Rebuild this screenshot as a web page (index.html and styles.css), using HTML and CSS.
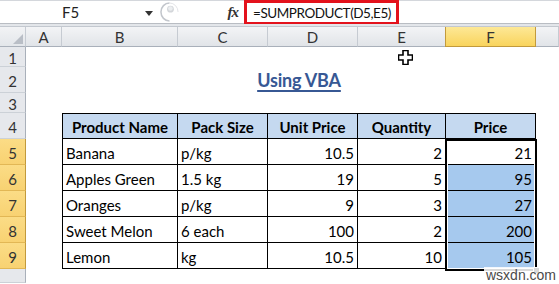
FILE: index.html
```html
<!DOCTYPE html>
<html>
<head>
<meta charset="utf-8">
<link rel="stylesheet" href="styles.css">
</head>
<body>
<div class="app">
  <div class="fbar">
    <div class="namebox">F5</div>
    <div class="nb-arrow"><svg width="8" height="5" viewBox="0 0 8 5"><path d="M0 0H8L4 5Z" fill="#333"/></svg></div>
    <div class="splitter"><svg width="20" height="22" viewBox="0 0 20 22"><path d="M10 1.5 A9 9.5 0 0 0 10 20.5" fill="none" stroke="#c2c6cc" stroke-width="1.6"/><path d="M10 1.5 A9 9.5 0 0 1 19 11" fill="none" stroke="#e0e2e6" stroke-width="1"/><circle cx="11" cy="8" r="3.6" fill="#d3d6da"/><circle cx="11" cy="7.3" r="2.4" fill="#eceef0"/></svg></div>
    <div class="fx">fx</div>
    <div class="formula"><div class="hl">=SUMPRODUCT(D5,E5)</div></div>
  </div>
  <div class="band"></div>
  <div class="sheet">
    <div class="corner"><svg width="10" height="10" viewBox="0 0 10 10"><path d="M10 0V10H0Z" fill="#b9bec6"/></svg></div>
    <div class="ch">A</div><div class="ch">B</div><div class="ch">C</div><div class="ch">D</div><div class="ch">E</div><div class="ch sel">F</div><div class="ch"></div>

    <div class="rh">1</div><div></div><div></div><div></div><div></div><div></div><div></div><div></div>

    <div class="rh">2</div><div></div><div class="title"><span>Using VBA</span></div><div></div>

    <div class="rh">3</div><div></div><div></div><div></div><div></div><div></div><div></div><div></div>

    <div class="rh">4</div><div></div>
    <div class="c th first">Product Name</div><div class="c th">Pack Size</div><div class="c th">Unit Price</div><div class="c th">Quantity</div><div class="c th">Price</div><div></div>

    <div class="rh sel">5</div><div></div>
    <div class="c first">Banana</div><div class="c">p/kg</div><div class="c n">10.5</div><div class="c n">2</div><div class="c n">21</div><div></div>
    <div class="rh sel">6</div><div></div>
    <div class="c first">Apples Green</div><div class="c">1.5 kg</div><div class="c n">19</div><div class="c n">5</div><div class="c n hi">95</div><div></div>
    <div class="rh sel">7</div><div></div>
    <div class="c first">Oranges</div><div class="c">p/kg</div><div class="c n">9</div><div class="c n">3</div><div class="c n hi">27</div><div></div>
    <div class="rh sel">8</div><div></div>
    <div class="c first">Sweet Melon</div><div class="c">6 each</div><div class="c n">100</div><div class="c n">2</div><div class="c n hi">200</div><div></div>
    <div class="rh sel">9</div><div></div>
    <div class="c first">Lemon</div><div class="c">kg</div><div class="c n">10.5</div><div class="c n">10</div><div class="c n hi">105</div><div></div>

    <div class="rh"></div><div></div><div></div><div></div><div></div><div></div><div></div><div></div>

    <div class="selection"><div class="handle"></div></div>
    <div class="cursor"><svg width="15" height="15" viewBox="0 0 15 15"><path d="M5 0.5H10V5H14.5V10H10V14.5H5V10H0.5V5H5Z" fill="#fff" stroke="#000" stroke-width="1.6" stroke-linejoin="miter"/></svg></div>
    <div class="watermark">wsxdn.com</div>
  </div>
</div>
</body>
</html>
```

FILE: styles.css
```css
* { box-sizing: border-box; }
html, body { margin: 0; padding: 0; background: #fff; }
body { width: 559px; height: 284px; overflow: hidden; font-family: Lato, "Open Sans", sans-serif; color: #000; }

.app { width: 559px; height: 284px; display: flex; flex-direction: column; }

.fbar {
  height: 24px;
  display: flex;
  align-items: stretch;
  border-top: 1px solid #d4d7dc;
  border-bottom: 1px solid #b9bdc3;
  background: #fff;
}
.namebox {
  width: 141px;
  display: flex; align-items: center; justify-content: center;
  font-size: 15px; color: #222;
}
.nb-arrow { width: 16px; display: flex; align-items: center; justify-content: center; padding-top: 2px; }
.splitter { width: 22px; display: flex; align-items: center; padding-left: 3px; }
.fx {
  width: 65px;
  display: flex; align-items: center; justify-content: flex-end;
  padding-right: 6px;
  font-family: "Liberation Serif", serif; font-style: italic; font-weight: bold;
  font-size: 15px; color: #333; letter-spacing: -1px;
}
.formula { flex: 1; display: flex; align-items: stretch; }
.hl {
  margin-top: -1px;
  width: 155px; height: 25px;
  border: 3px solid #e3121c;
  display: flex; align-items: center;
  padding-left: 6px;
  font-size: 13.5px; letter-spacing: -0.45px; color: #111;
  white-space: nowrap;
}

.band { height: 3px; background: #e3e6ea; border-bottom: 1px solid #c3c8cf; }

.sheet {
  position: relative;
  flex: 1;
  display: grid;
  grid-template-columns: 26px 36px 116px 90px 90px 88px 90px 23px;
  grid-template-rows: 20px 20px 26px 20px 26px 26px 26px 26px 26px 26px 14px;
  overflow: hidden;
}

.corner {
  background: linear-gradient(#f2f3f5, #e3e6ea);
  border-right: 1px solid #c6cbd2;
  border-bottom: 1px solid #a9b0ba;
  display: flex; align-items: flex-end; justify-content: flex-end;
  padding: 0 2px 2px 0;
}
.ch {
  background: linear-gradient(#f3f4f6, #e1e4e8);
  border-right: 1px solid #c6cbd2;
  border-bottom: 1px solid #a9b0ba;
  display: flex; align-items: center; justify-content: center;
  font-size: 15px; color: #333;
}
.ch.sel {
  background: linear-gradient(#fde896, #f9d45d);
  border-right: 1px solid #c29a3c;
  border-bottom: 1px solid #c29a3c;
  border-left: 1px solid #c29a3c;
  margin-left: -1px;
  color: #333;
}
.rh {
  background: #e6e8ec;
  border-right: 1px solid #a9b0ba;
  border-bottom: 1px solid #ccd1d7;
  display: flex; align-items: center; justify-content: center;
  font-size: 15px; color: #333;
  padding-top: 2px;
}
.rh.sel {
  background: linear-gradient(#fbdc86, #f8d272);
  border-right: 1px solid #c29a3c;
  border-bottom: 1px solid #e2b755;
}

.title {
  grid-column: 3 / 8;
  display: flex; align-items: flex-end; justify-content: center;
  padding-bottom: 2px;
}
.title span {
  font-weight: bold; font-size: 18px; letter-spacing: -0.2px; color: #375894;
  text-decoration: underline; text-decoration-thickness: 2px; text-underline-offset: 3px;
  line-height: 22px;
}

.c {
  border-right: 1px solid #000;
  border-bottom: 1px solid #000;
  font-size: 15px;
  display: flex; align-items: flex-end;
  padding: 0 3px 2px 3px;
  white-space: nowrap;
}
.c.first { border-left: 1px solid #000; }
.c.n { justify-content: flex-end; }
.c.hi { background: #a6c9ee; }
.c.th {
  border-top: 1px solid #000;
  background: #c5d9f0;
  font-weight: bold;
  justify-content: center;
  align-items: center;
  padding: 1px 0 0 0;
}

.selection {
  position: absolute;
  left: 445px; top: 112px;
  width: 92px; height: 132px;
  border: 2px solid #000;
  box-shadow: inset 0 0 0 1px #fff;
  pointer-events: none;
}
.handle {
  position: absolute;
  right: -5px; bottom: -5px;
  width: 7px; height: 7px;
  background: #000;
  border: 1px solid #fff;
}
.cursor { position: absolute; left: 398px; top: 22px; width: 15px; height: 15px; }
.watermark {
  position: absolute;
  left: 484px; top: 240px;
  font-family: "Liberation Sans", Arial, sans-serif;
  font-size: 14px; color: #4a4a4a;
  background: rgba(255,255,255,0.85);
  padding: 0 2px;
  line-height: 16px;
}
```
